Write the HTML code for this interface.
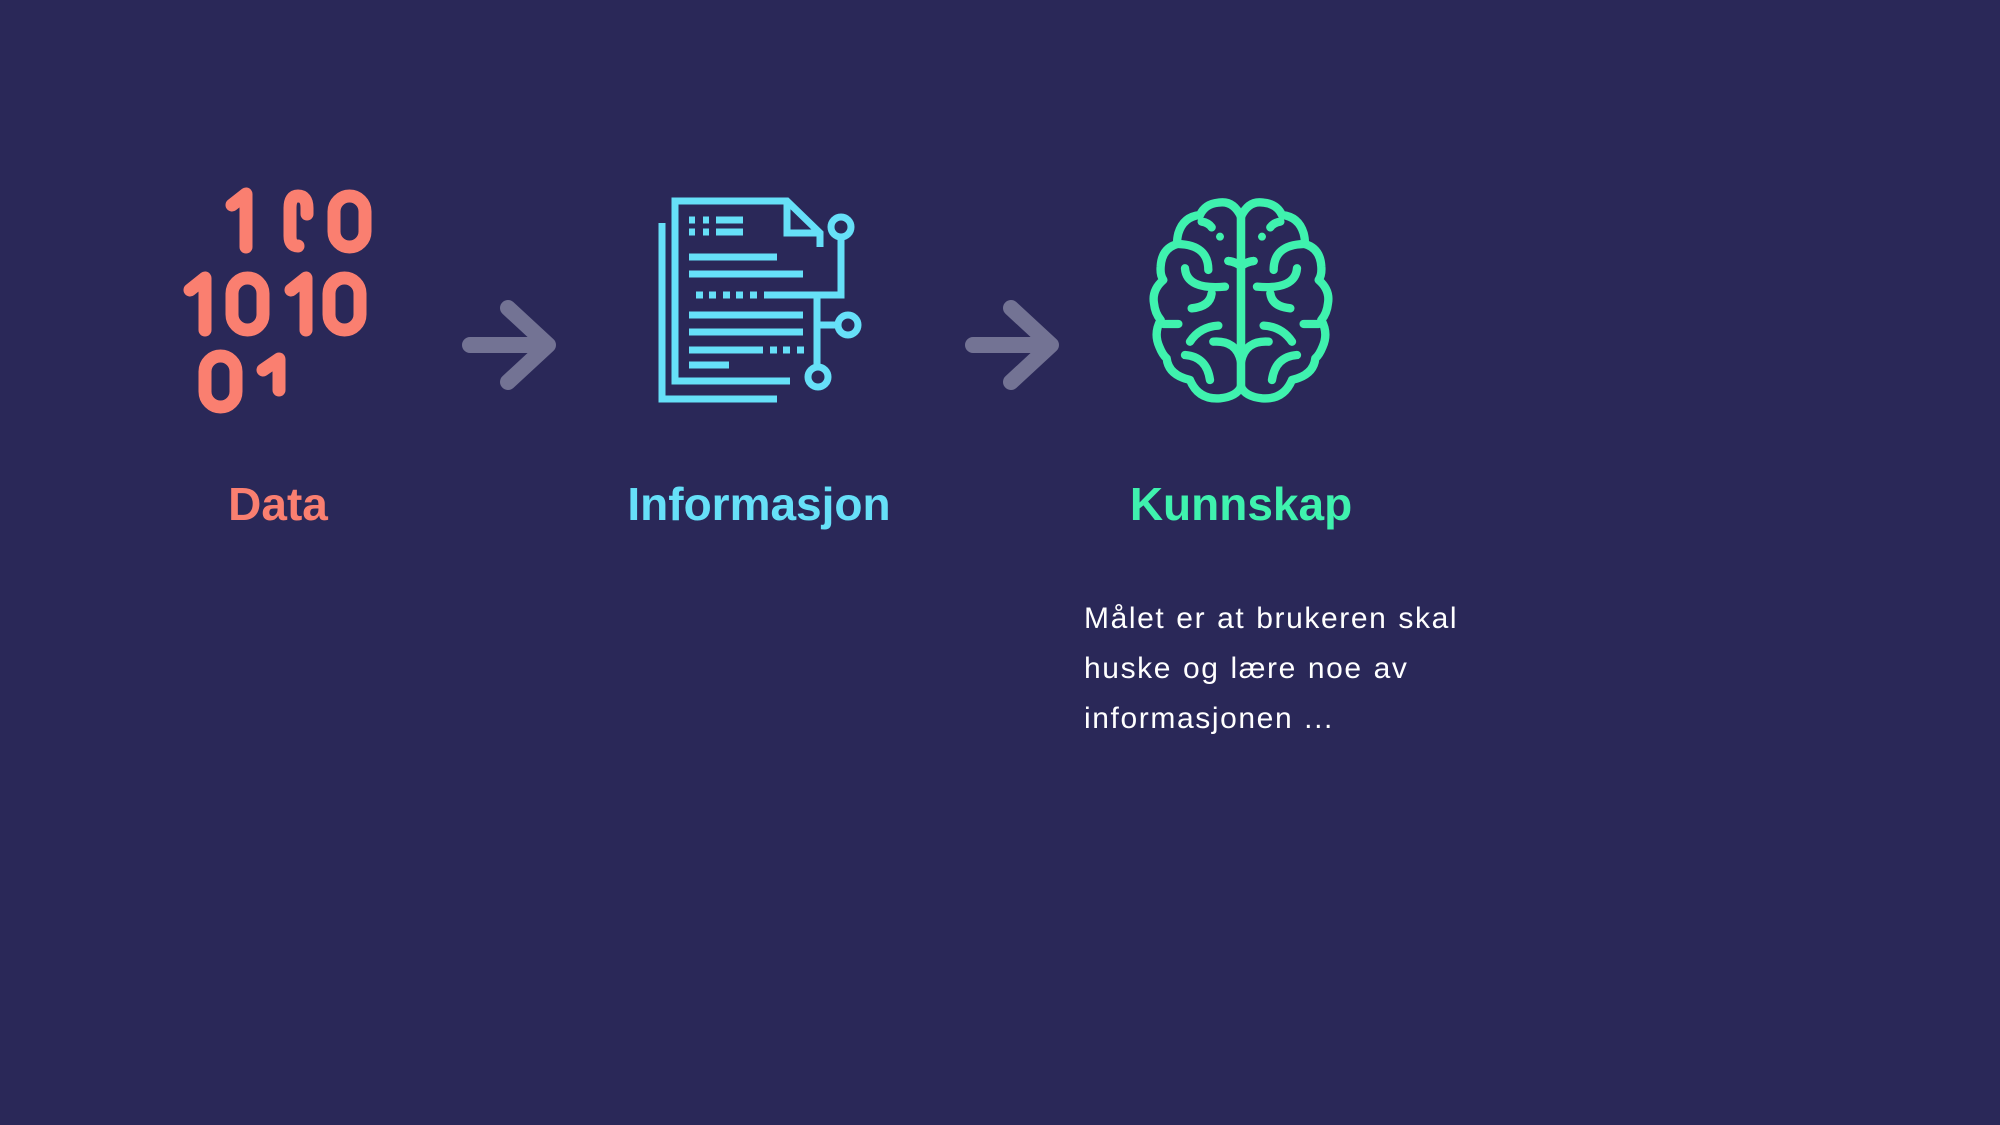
<!DOCTYPE html>
<html><head><meta charset="utf-8"><style>
html,body{margin:0;padding:0;background:#2a2858;width:2000px;height:1125px;overflow:hidden;font-family:"Liberation Sans",sans-serif}
.t{position:absolute;font-weight:bold;font-size:46px;white-space:nowrap;transform:translateX(-50%);top:477px}
.p{position:absolute;left:1084px;top:594px;color:#fff;font-size:30px;line-height:50px;letter-spacing:1.6px;word-spacing:1px}
svg{position:absolute;left:0;top:0}
</style></head><body>
<svg width="2000" height="1125" viewBox="0 0 2000 1125" fill="none" stroke-linecap="round" stroke-linejoin="round">
<g stroke="#fa7f70" stroke-width="13">
<path d="M232 205 L246 194 V247"/>
<path d="M307 214 V208 Q307 196 298 196 Q290 196 290 208 V236 Q290 246 298 246"/>
<rect x="334" y="196" width="31" height="51" rx="15.5"/>
<path d="M190 290 L205 278 V330"/>
<rect x="232" y="278" width="31" height="52" rx="15.5"/>
<path d="M291 290 L306 278 V330"/>
<rect x="329" y="278" width="31" height="52" rx="15.5"/>
<rect x="205" y="356" width="31" height="51" rx="15.5"/>
<path d="M263 370 L279 359 V390"/>
</g>
<g stroke="#737394" stroke-width="16">
<path d="M470 345 H548 M508 308 L548 345 L508 382"/>
<path d="M973 345 H1051 M1011 308 L1051 345 L1011 382"/>
</g>
<g stroke="#66e0f8" stroke-width="7" stroke-linecap="butt" stroke-linejoin="miter">
<path d="M662 223 V399 H777"/>
<path d="M820 247 V233 L787 201 H675 V381 H790"/>
<path d="M787 201 V233 H820"/>
<path d="M689 220 H695 M703 220 H709 M716 220 H743 M689 232 H695 M703 232 H709 M716 232 H743"/>
<path d="M689 257 H777 M689 274 H803 M689 315 H803 M689 332 H803 M689 350 H763 M689 365 H729"/>
<path d="M696 295 H703 M709 295 H716 M723 295 H730 M736 295 H743 M750 295 H757"/>
<path d="M770 350 H777 M783 350 H790 M797 350 H804"/>
<path d="M764 295 H841 V238 M817 295 V366 M817 325 H837"/>
<circle cx="841" cy="227" r="10"/>
<circle cx="848" cy="325" r="10"/>
<circle cx="818" cy="377" r="10"/>
</g>
<g transform="translate(1130,180) scale(0.3333)" stroke="#3ff2ae" stroke-width="25">
<g id="h">
<path d="M333 110 Q310 60 265 68 Q225 72 210 105 Q160 110 145 160 Q140 180 142 192 Q95 205 92 260 Q90 285 100 300 Q65 330 72 370 Q75 400 92 420 Q70 460 88 500 Q98 525 110 535 Q115 585 180 600 Q205 660 270 655 Q320 650 333 620"/>
<path d="M215 125 Q235 128 245 142"/>
<path d="M333 110 V620"/>
<path d="M295 243 Q315 245 333 258 Q351 245 371 243"/>
<path d="M145 192 Q235 195 235 270"/>
<path d="M165 265 Q170 330 285 320"/>
<path d="M185 385 Q240 380 245 340"/>
<path d="M100 432 H145"/>
<path d="M180 485 Q210 440 265 437"/>
<path d="M250 485 Q320 480 333 545"/>
<path d="M165 525 Q230 530 240 600"/>
<circle cx="270" cy="170" r="12" fill="#3ff2ae" stroke="none"/>
</g>
<use href="#h" transform="translate(666,0) scale(-1,1)"/>
</g>
</svg>
<div class="t" style="left:278px;color:#fa7f70">Data</div>
<div class="t" style="left:759px;color:#66e0f8">Informasjon</div>
<div class="t" style="left:1241px;color:#3ff2ae">Kunnskap</div>
<div class="p">Målet er at brukeren skal<br>huske og lære noe av<br>informasjonen ...</div>
</body></html>
